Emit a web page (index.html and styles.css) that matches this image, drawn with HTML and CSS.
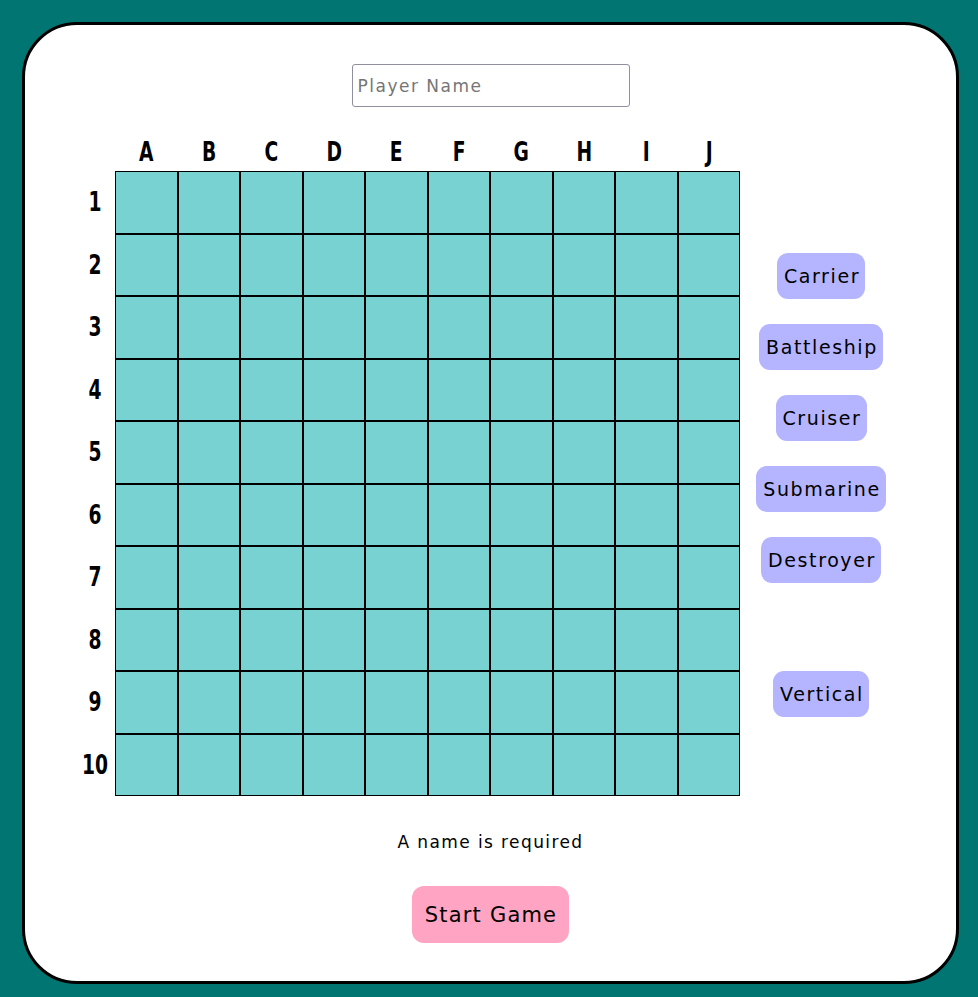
FILE: index.html
```html
<!DOCTYPE html>
<html>
<head>
<meta charset="utf-8">
<link rel="stylesheet" href="styles.css">
</head>
<body>
<div class="card">
  <input class="name" type="text" placeholder="Player Name">
  <div class="board-row">
    <div class="board">
      <div class="corner"></div>
      <div class="col-label">A</div><div class="col-label">B</div><div class="col-label">C</div><div class="col-label">D</div><div class="col-label">E</div><div class="col-label">F</div><div class="col-label">G</div><div class="col-label">H</div><div class="col-label">I</div><div class="col-label">J</div>
      <div class="row-label">1</div><div class="cell"></div><div class="cell"></div><div class="cell"></div><div class="cell"></div><div class="cell"></div><div class="cell"></div><div class="cell"></div><div class="cell"></div><div class="cell"></div><div class="cell"></div>
      <div class="row-label">2</div><div class="cell"></div><div class="cell"></div><div class="cell"></div><div class="cell"></div><div class="cell"></div><div class="cell"></div><div class="cell"></div><div class="cell"></div><div class="cell"></div><div class="cell"></div>
      <div class="row-label">3</div><div class="cell"></div><div class="cell"></div><div class="cell"></div><div class="cell"></div><div class="cell"></div><div class="cell"></div><div class="cell"></div><div class="cell"></div><div class="cell"></div><div class="cell"></div>
      <div class="row-label">4</div><div class="cell"></div><div class="cell"></div><div class="cell"></div><div class="cell"></div><div class="cell"></div><div class="cell"></div><div class="cell"></div><div class="cell"></div><div class="cell"></div><div class="cell"></div>
      <div class="row-label">5</div><div class="cell"></div><div class="cell"></div><div class="cell"></div><div class="cell"></div><div class="cell"></div><div class="cell"></div><div class="cell"></div><div class="cell"></div><div class="cell"></div><div class="cell"></div>
      <div class="row-label">6</div><div class="cell"></div><div class="cell"></div><div class="cell"></div><div class="cell"></div><div class="cell"></div><div class="cell"></div><div class="cell"></div><div class="cell"></div><div class="cell"></div><div class="cell"></div>
      <div class="row-label">7</div><div class="cell"></div><div class="cell"></div><div class="cell"></div><div class="cell"></div><div class="cell"></div><div class="cell"></div><div class="cell"></div><div class="cell"></div><div class="cell"></div><div class="cell"></div>
      <div class="row-label">8</div><div class="cell"></div><div class="cell"></div><div class="cell"></div><div class="cell"></div><div class="cell"></div><div class="cell"></div><div class="cell"></div><div class="cell"></div><div class="cell"></div><div class="cell"></div>
      <div class="row-label">9</div><div class="cell"></div><div class="cell"></div><div class="cell"></div><div class="cell"></div><div class="cell"></div><div class="cell"></div><div class="cell"></div><div class="cell"></div><div class="cell"></div><div class="cell"></div>
      <div class="row-label">10</div><div class="cell"></div><div class="cell"></div><div class="cell"></div><div class="cell"></div><div class="cell"></div><div class="cell"></div><div class="cell"></div><div class="cell"></div><div class="cell"></div><div class="cell"></div>
    </div>
    <div class="ships">
      <button class="ship">Carrier</button>
      <button class="ship">Battleship</button>
      <button class="ship">Cruiser</button>
      <button class="ship">Submarine</button>
      <button class="ship">Destroyer</button>
      <button class="ship vertical">Vertical</button>
    </div>
  </div>
  <p class="error">A name is required</p>
  <button class="start">Start Game</button>
</div>
</body>
</html>
```

FILE: styles.css
```css
html, body {
  margin: 0;
  padding: 0;
  background: #007571;
}
body {
  font-family: "DejaVu Sans", "Liberation Sans", sans-serif;
  color: #000;
}
.card {
  box-sizing: border-box;
  margin: 22px 19px 0 22px;
  height: 962px;
  background: #fff;
  border: 3px solid #000;
  border-radius: 55px;
  display: flex;
  flex-direction: column;
  align-items: center;
  padding-top: 39px;
}
.name {
  box-sizing: border-box;
  width: 278px;
  height: 43px;
  border: 1px solid #8f8f9d;
  border-radius: 3px;
  padding: 0 5px;
  font-family: "DejaVu Sans", sans-serif;
  font-size: 17px;
  letter-spacing: 1.5px;
  color: #000;
}
.name::placeholder {
  color: #757575;
}
.board-row {
  display: flex;
  margin-top: 24px;
}
.board {
  display: grid;
  grid-template-columns: 40px repeat(10, 62.5px);
  grid-template-rows: 40px repeat(10, 62.5px);
}
.col-label, .row-label {
  font-family: "DejaVu Sans", sans-serif;
  font-weight: bold;
  font-size: 26px;
  display: flex;
  justify-content: center;
  transform: scaleX(0.72);
}
.col-label {
  align-items: flex-end;
  padding-bottom: 4px;
}
.row-label {
  align-items: center;
}
.cell {
  box-sizing: border-box;
  border: 1px solid #000;
  background: #78d2d2;
}
.ships {
  box-sizing: border-box;
  width: 166px;
  padding: 122px 4px 0 0;
  display: flex;
  flex-direction: column;
  align-items: center;
  gap: 25px;
}
.ship {
  height: 46px;
  padding: 0 5px 0 7px;
  border: none;
  border-radius: 11px;
  background: #b4b4ff;
  font-family: "DejaVu Sans", sans-serif;
  font-size: 19px;
  letter-spacing: 1.6px;
  color: #000;
}
.ship.vertical {
  margin-top: 63px;
}
.error {
  margin: 36px 0 0;
  line-height: 20px;
  font-size: 17px;
  letter-spacing: 1.4px;
}
.start {
  margin-top: 34px;
  height: 57px;
  padding: 0 12px 0 13px;
  border: none;
  border-radius: 12px;
  background: #ffa4c3;
  font-family: "DejaVu Sans", sans-serif;
  font-size: 21px;
  letter-spacing: 1.2px;
  color: #000;
}
```
